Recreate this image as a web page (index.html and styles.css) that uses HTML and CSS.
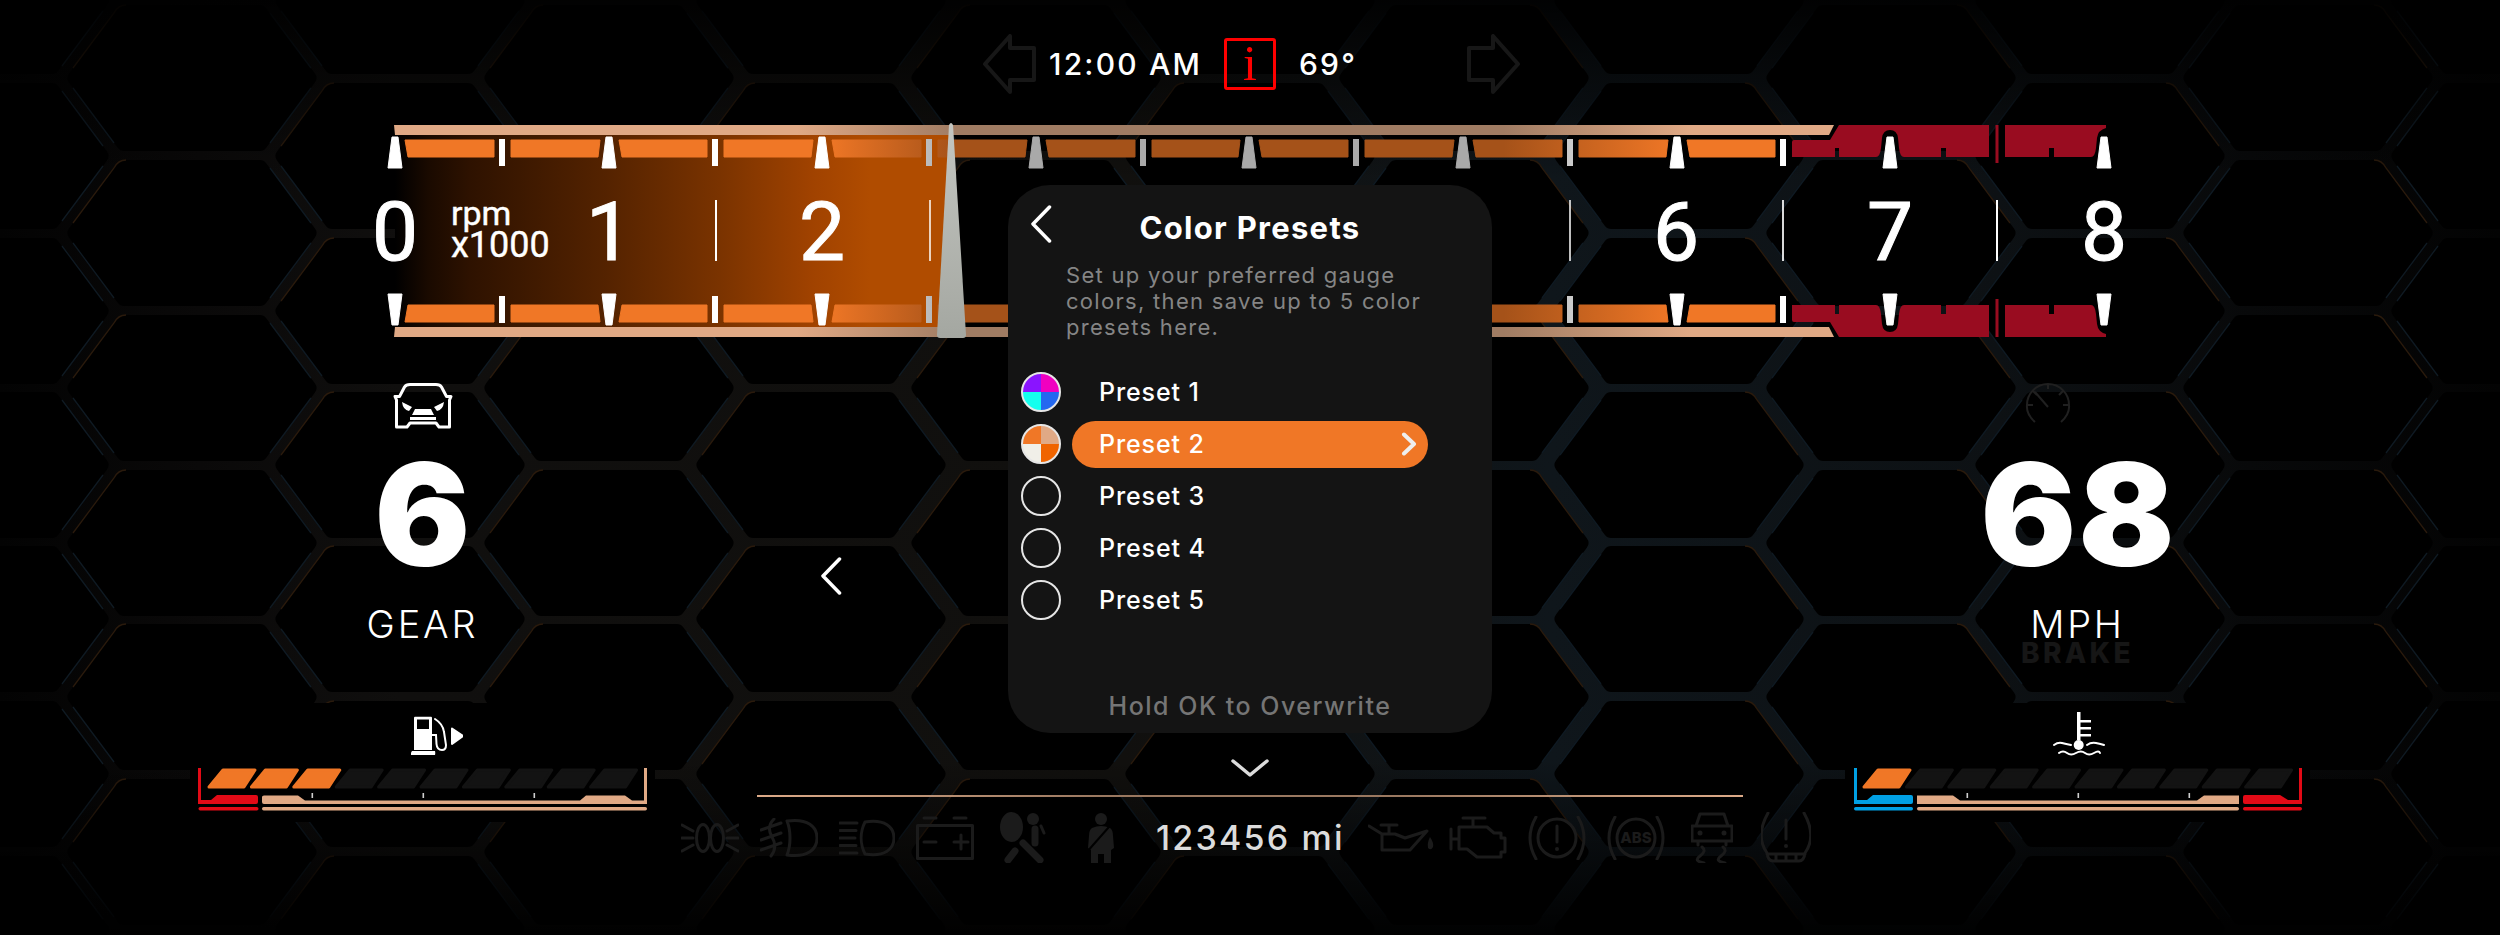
FILE: index.html
```html
<!DOCTYPE html>
<html lang="en">
<head>
<meta charset="utf-8">
<title>Gauge cluster</title>
<link rel="stylesheet" href="styles.css">
</head>
<body>
<div class="dash">
  <svg class="hexes" viewBox="0 0 2500 935" width="2500" height="935" aria-hidden="true">
    <defs>
      <linearGradient id="hexLine" x1="0" x2="2500" y1="0" y2="0" gradientUnits="userSpaceOnUse">
        <stop offset="0" stop-color="#030303"/><stop offset=".08" stop-color="#0a0909"/><stop offset=".16" stop-color="#100f0e"/><stop offset=".45" stop-color="#11100e"/>
        <stop offset=".62" stop-color="#0f161b"/><stop offset=".8" stop-color="#0d1114"/><stop offset=".9" stop-color="#08090a"/><stop offset="1" stop-color="#030303"/>
      </linearGradient>
      <linearGradient id="fadeTop" x1="0" x2="0" y1="0" y2="1"><stop offset="0" stop-color="#000" stop-opacity=".9"/><stop offset="1" stop-color="#000" stop-opacity="0"/></linearGradient>
      <linearGradient id="fadeBottom" x1="0" x2="0" y1="0" y2="1"><stop offset="0" stop-color="#000" stop-opacity="0"/><stop offset="1" stop-color="#000" stop-opacity=".95"/></linearGradient>
      <g id="cell">
        <path class="cell-fill" d="M-116.4 0L-67.8 -65H67.8L116.4 0L67.8 65H-67.8Z"/>
        <path class="edge-warm" d="M-119 -10L-78 -65Q-74 -73 -66 -73"/>
        <path class="edge-cool" d="M78 -65L119 -10M-119 10L-78 65M78 65L119 10"/>
      </g>
      <g id="colA">
        <use href="#cell" y="78"/><use href="#cell" y="233"/><use href="#cell" y="388"/><use href="#cell" y="543"/><use href="#cell" y="697"/><use href="#cell" y="852"/><use href="#cell" y="1007"/>
      </g>
      <g id="colB">
        <use href="#cell" y="1"/><use href="#cell" y="156"/><use href="#cell" y="311"/><use href="#cell" y="465"/><use href="#cell" y="619"/><use href="#cell" y="774"/><use href="#cell" y="929"/>
      </g>
      <g id="hexHalf">
        <use href="#colB" x="-16"/><use href="#colA" x="192"/><use href="#colB" x="400"/><use href="#colA" x="609"/><use href="#colB" x="821"/><use href="#colA" x="1036"/>
      </g>
    </defs>
    <rect width="2500" height="935" fill="url(#hexLine)"/>
    <use href="#hexHalf"/>
    <use href="#hexHalf" transform="matrix(-1 0 0 1 2500 0)"/>
    <use href="#colB" x="1250"/>
    <rect width="2500" height="180" fill="url(#fadeTop)"/>
    <rect y="760" width="2500" height="175" fill="url(#fadeBottom)"/>
  </svg>

  <header class="topbar">
    <svg class="turn" width="54" height="60" viewBox="0 0 54 60"><path d="M2 30L27 2V14H51V46H27V58Z"/></svg>
    <span class="clock">12:00 AM</span>
    <span class="info">i</span>
    <span class="temp">69°</span>
    <svg class="turn turn-right" width="54" height="60" viewBox="0 0 54 60"><path d="M52 30L27 2V14H3V46H27V58Z"/></svg>
  </header>

  <svg class="tach" viewBox="0 120 2500 225" width="2500" height="225">
    <defs>
      <linearGradient id="gTan" x1="394" x2="1835" y1="0" y2="0" gradientUnits="userSpaceOnUse">
        <stop offset=".28" stop-color="#e0a985"/><stop offset=".39" stop-color="#a07c63"/><stop offset=".77" stop-color="#a07c63"/><stop offset=".9" stop-color="#e0a985"/>
      </linearGradient>
      <linearGradient id="gOrange" x1="394" x2="1835" y1="0" y2="0" gradientUnits="userSpaceOnUse">
        <stop offset=".3" stop-color="#f07726"/><stop offset=".39" stop-color="#a55219"/><stop offset=".77" stop-color="#a55219"/><stop offset=".89" stop-color="#f07726"/>
      </linearGradient>
      <linearGradient id="gWhite" x1="394" x2="1835" y1="0" y2="0" gradientUnits="userSpaceOnUse">
        <stop offset=".3" stop-color="#ffffff"/><stop offset=".39" stop-color="#a9a9a9"/><stop offset=".77" stop-color="#a9a9a9"/><stop offset=".89" stop-color="#ffffff"/>
      </linearGradient>
      <linearGradient id="gSweep" x1="395" x2="950" y1="0" y2="0" gradientUnits="userSpaceOnUse">
        <stop offset="0" stop-color="#000"/><stop offset=".06" stop-color="#1a0a00"/><stop offset=".135" stop-color="#2e1200"/><stop offset=".385" stop-color="#552300"/><stop offset=".585" stop-color="#7a3300"/><stop offset=".75" stop-color="#a04200"/><stop offset=".855" stop-color="#b04c00"/><stop offset="1" stop-color="#b04c00"/>
      </linearGradient>
      <linearGradient id="gNeedle" x1="0" x2="0" y1="0" y2="1"><stop offset="0" stop-color="#c4c6c1"/><stop offset="1" stop-color="#a4a7a1"/></linearGradient>
      <g id="tachHalf">
        <path fill="url(#gTan)" d="M394 125H1834L1829 135H395Z"/>
        <path fill="url(#gOrange)" stroke="url(#gOrange)" stroke-linejoin="round" d="M405 140H494V157H408ZM511 140H600L598 157H511ZM619 140H707V157H622ZM724 140H813L811 157H724ZM832 140H921V157H835ZM938 140H1027L1025 157H938ZM1046 140H1135V157H1049ZM1152 140H1240L1238 157H1152ZM1259 140H1348V157H1262ZM1365 140H1454L1452 157H1365ZM1473 140H1562V157H1476ZM1579 140H1668L1666 157H1579ZM1687 140H1775V157H1690Z"/>
        <path fill="url(#gWhite)" stroke="url(#gWhite)" stroke-linejoin="round" d="M392 137H398L402 168H388ZM606 137H612L616 168H602ZM819 137H825L829 168H815ZM1033 137H1039L1043 168H1029ZM1246 137H1252L1256 168H1242ZM1460 137H1466L1470 168H1456ZM1674 137H1680L1684 168H1670ZM1887 137H1893L1897 168H1883ZM2101 137H2107L2111 168H2097Z"/>
        <path fill="url(#gWhite)" d="M499 139h6v27h-6zM712 139h6v27h-6zM926 139h6v27h-6zM1140 139h6v27h-6zM1353 139h6v27h-6zM1567 139h6v27h-6zM1780 139h6v27h-6z"/>
        <path class="redline" d="M1792 142Q1792 140 1794 140H1830L1839 125H1989V157H1946V148H1941V157H1904Q1900 157 1899 148L1898 138Q1897 130 1890 130Q1883 130 1882 138L1881 148Q1880 157 1876 157H1839V148H1835V157H1792ZM1995.5 125H1998.5V163H1995.5ZM2005 125H2106V128Q2098 130 2097 138L2096 148Q2095 157 2091 157H2054V148H2049V157H2005Z"/>
      </g>
    </defs>
    <rect x="395" y="135" width="555" height="192" fill="url(#gSweep)"/>
    <use href="#tachHalf"/>
    <use href="#tachHalf" transform="matrix(1 0 0 -1 0 462)"/>
    <g class="dividers">
      <rect x="715" y="200" width="2" height="61"/>
      <rect x="929" y="200" width="2" height="61" opacity=".75"/>
      <rect x="1569" y="200" width="2" height="61" opacity=".75"/>
      <rect x="1782" y="200" width="2" height="61" opacity=".85"/>
      <rect x="1996" y="200" width="2" height="61"/>
    </g>
    <g class="rev">
      <text x="395" y="260">0</text><text x="609" y="260">1</text><text x="822" y="260">2</text>
      <text x="1676" y="260">6</text><text x="1890" y="260">7</text><text x="2104" y="260">8</text>
    </g>
    <text class="unit" x="451" y="225">rpm</text>
    <text class="unit unit-x" x="451" y="257">x1000</text>
    <path fill="url(#gNeedle)" d="M949 125Q951 121 953 125L966 335Q966 338 963 338H940Q937 338 937 335Z"/>
  </svg>

  <main class="lower">
    <section class="side">
      <div class="stat">
        <svg class="car" width="60" height="46" viewBox="0 0 60 46"><path class="car-body" d="M2 13.5H6.5L11.5 4Q13 1.5 17 1.5H43Q47 1.5 48.5 4L53.5 13.5H58L56.5 17V44H46L43 40H17L14 44H3.5V17Z"/><path class="car-face" d="M9 19L19 24L16 28Q10 27 9 19ZM51 19L41 24L44 28Q50 27 51 19ZM22 26H38L41 32H19ZM17 34H43V37H17Z"/></svg>
        <div class="big">6</div>
        <div class="label">GEAR</div>
      </div>
      <div class="gauge">
        <svg class="fuel" width="52" height="39" viewBox="0 0 52 39"><path class="white" d="M4 0.7H20Q21 0.7 21 2V34H3V2Q3 0.7 4 0.7ZM6 3.5V13H18V3.5ZM1 35H24Q24.5 37 24 39H0Q-0.5 37 1 35Z" fill-rule="evenodd"/><path class="hose" d="M24 3Q32 8 33 16L35 29Q35 34 31 34Q26 34 25.5 28L25 19H21"/><path class="tri" d="M41 12.5L52 20L41 28Z"/></svg>
        <svg class="rail" viewBox="190 768 465 44" width="465" height="44">
          <defs>
            <path id="bar" d="M15 770H47L36 787H1Z"/>
            <g id="ticks"><rect x="0" y="793" width="1.6" height="5"/><rect x="111" y="793" width="1.6" height="5"/><rect x="222" y="793" width="1.6" height="5"/></g>
          </defs>
          <g class="cells-off"><use href="#bar" x="335.2"/><use href="#bar" x="377.6"/><use href="#bar" x="420"/><use href="#bar" x="462.4"/><use href="#bar" x="504.8"/><use href="#bar" x="547.2"/><use href="#bar" x="589.6"/></g>
          <g class="cells-on"><use href="#bar" x="208"/><use href="#bar" x="250.4"/><use href="#bar" x="292.8"/></g>
          <path class="red" d="M198 768H201V800H211L217 795H256Q258 795 258 797V802Q258 804 256 804H198Z"/><rect class="red" x="198.500" y="807" width="60" height="3.5" rx="1.700"/>
          <path class="tan" d="M262 797Q262 795.500 264 795.500H298L305 800.500H580L586 795.500H625L632 800.500H644V768H647V804H264Q262 804 262 802Z"/><rect class="tan" x="262" y="807" width="385" height="3.5" rx="1.700"/>
          <use class="tick" href="#ticks" x="311.500"/>
        </svg>
      </div>
    </section>

    <section class="middle">
      <svg class="back-outer" width="22" height="38" viewBox="0 0 22 38"><path d="M19.500 2L3 19L19.500 36"/></svg>
      <svg class="more" width="38" height="18" viewBox="0 0 38 18"><path d="M2 2L19 16L36 2"/></svg>
      <div class="odo-line"></div>
      <div class="tells">
        <svg width="58" height="36" viewBox="0 0 58 36"><ellipse cx="22" cy="18" rx="6.500" ry="13.500"/><ellipse cx="36" cy="18" rx="6.500" ry="13.500"/><path d="M1 5L12 11M1 18H12M1 31L12 25M57 5L46 11M57 18H46M57 31L46 25"/></svg>
        <svg width="58" height="40" viewBox="0 0 58 40"><path d="M27 3C48 0 57 9 57 20C57 31 48 40 27 37C31 27 31 13 27 3Z"/><path d="M1 12L21 5M1 22L21 15M1 32L21 25M14 1Q6 9 12 19T11 38"/></svg>
        <svg width="56" height="38" viewBox="0 0 56 38"><path d="M26 3C46 0 55 8 55 19C55 30 46 38 26 35C21 25 21 13 26 3Z"/><path d="M1 4H18M1 11.500H17M1 19H16M1 26.500H17M1 34H18"/></svg>
        <svg width="58" height="44" viewBox="0 0 58 44"><path d="M1.500 9.500H56.500V42.500H1.500ZM8 2H20M38 2H50M8 26H20M38 26H52M45 19V33"/></svg>
        <svg class="t-bag" width="47" height="51" viewBox="0 0 47 51"><ellipse class="solid" cx="11.500" cy="15" rx="11.500" ry="15"/><circle class="solid" cx="33" cy="7" r="6"/><path class="thick" d="M35 17V31M15 39L8 48M23 31L40 48"/><path d="M41 14L44 21"/></svg>
        <svg class="t-belt" width="34" height="51" viewBox="0 0 34 51"><circle class="solid" cx="17" cy="7" r="6"/><path class="solid" d="M8 16Q17 12 26 16Q29 18 29 24L30 36L27 38V51H20V42H14V51H7V38L4 36L5 24Q5 18 8 16Z"/><path class="cut" d="M2 41L32 7"/></svg>
        <span class="odo">123456 mi</span>
        <svg class="t-oil" width="66" height="29" viewBox="0 0 66 29"><path d="M1 3L14 11V27H42L59 8L37 15L27 11H14M13 2H29M21 2V11"/><path class="solid" d="M62 14Q66 20 65 24Q63 28 60 25Q59 20 62 14Z"/></svg>
        <svg class="t-eng" width="58" height="43" viewBox="0 0 58 43"><path d="M2 13V33M2 23H10M10 11H38L45 17H52V22H56V36H52V41H28L18 33H10ZM24 11V3M14 2H36"/></svg>
        <svg width="58" height="44" viewBox="0 0 58 44"><circle cx="29" cy="22" r="19"/><path d="M8 1Q-4 22 8 43M50 1Q62 22 50 43M29 10V26"/><circle class="solid" cx="29" cy="33" r="2"/></svg>
        <svg width="58" height="44" viewBox="0 0 58 44"><circle cx="29" cy="22" r="19"/><path d="M8 1Q-4 22 8 43M50 1Q62 22 50 43"/><text class="abs" x="29" y="27">ABS</text></svg>
        <svg class="t-skid" width="42" height="51" viewBox="0 0 42 51"><path d="M9 2H33L37 14H41V29H1V14H5ZM5 14H37M7 29V33M35 29V33"/><path d="M11 35Q16 39 9 44T13 51M32 35Q37 39 30 44T34 51"/><circle class="solid" cx="9" cy="21" r="2.500"/><circle class="solid" cx="33" cy="21" r="2.500"/></svg>
        <svg class="t-tpms" width="50" height="51" viewBox="0 0 50 51"><path d="M7 1Q-6 24 6 41Q7 49 12 49H38Q43 49 44 41Q56 24 43 1M6 42H44M15 42V49M25 42V49M35 42V49M25 8V27"/><circle class="solid" cx="25" cy="34" r="2"/></svg>
      </div>
    </section>

    <section class="side">
      <div class="stat">
        <svg class="speedo" width="46" height="46" viewBox="0 0 46 46"><path d="M10 39Q1 31 2 22A21 21 0 0 1 44 22Q45 31 36 39M23 1V6M2 22H8M44 22H38M8 8L12 12M38 8L34 12M10 9L23 24"/></svg>
        <div class="big big-speed">68</div>
        <div class="label">MPH</div>
        <div class="brake">BRAKE</div>
      </div>
      <div class="gauge">
        <svg class="coolant" width="52" height="45" viewBox="0 0 52 45"><path class="white" d="M24 0H27.500V28H24ZM27.500 8H38V10.500H27.500ZM27.500 15H38V17.500H27.500ZM27.500 22H38V24.500H27.500Z"/><circle class="white" cx="25.700" cy="33" r="5"/><path class="hose" d="M1 33Q5 30 9 31T18 33M34 33Q38 30 43 31T51 33M6 41Q10 38 14 41T23 41T32 41T41 41T47 41"/></svg>
        <svg class="rail" viewBox="1845 768 465 44" width="465" height="44">
          <g class="cells-off"><use href="#bar" x="1905.400"/><use href="#bar" x="1947.800"/><use href="#bar" x="1990.200"/><use href="#bar" x="2032.600"/><use href="#bar" x="2075"/><use href="#bar" x="2117.400"/><use href="#bar" x="2159.800"/><use href="#bar" x="2202.200"/><use href="#bar" x="2244.600"/></g>
          <g class="cells-on"><use href="#bar" x="1863"/></g>
          <path class="blue" d="M1854 768H1857V800H1867L1873 795H1911Q1913 795 1913 797V802Q1913 804 1911 804H1854Z"/><rect class="blue" x="1854" y="807" width="59" height="3.5" rx="1.700"/>
          <path class="tan" d="M1917 795.500H1953L1960 800.500H2197L2204 795.500H2239V804H1917Z"/><rect class="tan" x="1917" y="807" width="322" height="3.5" rx="1.700"/>
          <path class="red" d="M2245 795H2280L2288 800H2299V768H2302V804H2245Q2243 804 2243 802V797Q2243 795 2245 795Z"/><rect class="red" x="2243" y="807" width="59" height="3.5" rx="1.700"/>
          <use class="tick" href="#ticks" x="1966.500"/>
        </svg>
      </div>
    </section>
  </main>

  <aside class="panel">
    <div class="panel-head">
      <svg class="panel-back" width="22" height="38" viewBox="0 0 22 38"><path d="M19.500 2L3 19L19.500 36"/></svg>
      <h1>Color Presets</h1>
    </div>
    <p class="desc">Set up your preferred gauge colors, then save up to 5 color presets here.</p>
    <ul class="presets">
      <li><span class="swatch swatch-a"></span><span class="pill">Preset 1</span></li>
      <li><span class="swatch swatch-b"></span><span class="pill pill-on">Preset 2<svg width="16" height="24" viewBox="0 0 16 24"><path d="M3 2.500L13 12L3 21.500"/></svg></span></li>
      <li><span class="swatch"></span><span class="pill">Preset 3</span></li>
      <li><span class="swatch"></span><span class="pill">Preset 4</span></li>
      <li><span class="swatch"></span><span class="pill">Preset 5</span></li>
    </ul>
    <p class="hint">Hold OK to Overwrite</p>
  </aside>
</div>
</body>
</html>
```

FILE: styles.css
```css
* { box-sizing: border-box; }
html, body { margin: 0; padding: 0; background: #000; }
.dash {
  position: relative;
  width: 2500px;
  height: 935px;
  overflow: hidden;
  background: #000;
  color: #fff;
  font-family: Inter, "Liberation Sans", sans-serif;
}
svg { display: block; flex: none; }

/* backdrop */
.hexes { position: absolute; left: 0; top: 0; }
.cell-fill { fill: #000; stroke: #000; stroke-width: 16; stroke-linejoin: round; }
.edge-warm { fill: none; stroke: #2a1a0c; stroke-width: 1.3; }
.edge-cool { fill: none; stroke: #0f1a23; stroke-width: 1.3; }

/* top bar */
.topbar {
  position: relative;
  height: 120px;
  padding: 8px 0 0 983px;
  display: flex;
  align-items: center;
}
.turn path { fill: none; stroke: #171717; stroke-width: 4; stroke-linejoin: round; }
.clock, .temp { font-size: 30px; font-weight: 500; letter-spacing: 2.2px; }
.clock { margin: 0 22px 0 12px; }
.info {
  width: 52px;
  height: 52px;
  border: 3px solid #f00;
  border-radius: 3px;
  color: #f00;
  font: 50px/44px "Liberation Serif", serif;
  text-align: center;
}
.temp { margin: 0 109px 0 23px; }

/* tach */
.tach { position: relative; }
.redline { fill: #990c20; }
.dividers rect { fill: #fff; }
.rev text { font: 400 82px Roboto, sans-serif; fill: #fff; stroke: #fff; stroke-width: 1; text-anchor: middle; }
.unit { font: 400 34px Roboto, sans-serif; fill: #fff; stroke: #fff; stroke-width: .4; }
.unit-x { font-size: 36px; }

/* lower area */
.lower {
  position: relative;
  display: flex;
  padding: 0 190px;
  height: 590px;
}
.side { width: 465px; display: flex; flex-direction: column; }
.stat {
  height: 358px;
  padding-top: 38px;
  display: flex;
  flex-direction: column;
  align-items: center;
}
.car-body { fill: none; stroke: #fff; stroke-width: 3; stroke-linejoin: round; }
.car-face { fill: #fff; }
.big {
  margin-top: 29px;
  font-size: 142px;
  line-height: 113px;
  font-weight: 900;
}
.big-speed { letter-spacing: 2px; margin-right: -2px; }
.label {
  margin-top: 40px;
  font-size: 38px;
  line-height: 26px;
  font-weight: 300;
  letter-spacing: 2.8px;
}
.brake {
  margin-top: 6px;
  font-size: 28px;
  line-height: 20px;
  font-weight: 800;
  letter-spacing: 3.3px;
  color: #161616;
}
.speedo { margin-right: 59px; }
.speedo path { fill: none; stroke: #202020; stroke-width: 2; }

.gauge {
  height: 119px;
  padding-top: 13px;
  background: #000;
  display: flex;
  flex-direction: column;
  align-items: center;
}
.fuel { margin: 0 0 13px 29px; }
.coolant { margin: -4px 0 11px 3px; }
.white, .tri { fill: #fff; }
.tri { stroke: #fff; stroke-width: 2; stroke-linejoin: round; }
.hose { fill: none; stroke: #fff; stroke-width: 2; stroke-linecap: round; }
.cells-off use { fill: #131313; stroke: #131313; stroke-width: 3; stroke-linejoin: round; }
.cells-on use { fill: #f07726; stroke: #f07726; stroke-width: 3; stroke-linejoin: round; }
.red { fill: #e20a16; }
.blue { fill: #00a0e4; }
.tan { fill: #e0a985; }
.tick { fill: #cfcfcf; }

/* middle column */
.middle {
  width: 1190px;
  display: flex;
  flex-direction: column;
  align-items: center;
}
.back-outer { align-self: flex-start; margin: 212px 0 0 165px; }
.back-outer path, .panel-back path { fill: none; stroke: #fff; stroke-width: 3.5; stroke-linecap: round; stroke-linejoin: round; }
.more { margin-top: 164px; }
.more path { fill: none; stroke: #dcdcdc; stroke-width: 3.5; stroke-linecap: round; stroke-linejoin: round; }
.odo-line {
  margin-top: 18px;
  width: 986px;
  height: 2px;
  background: linear-gradient(90deg, #dcaa88, #9a7860 35%, #9a7860 65%, #dcaa88);
}
.tells {
  align-self: flex-start;
  margin: 15px 0 0 26px;
  height: 51px;
  display: flex;
  align-items: center;
  gap: 21px;
}
.tells svg path, .tells svg circle, .tells svg ellipse { fill: none; stroke: #1b1b1b; stroke-width: 3; stroke-linecap: round; stroke-linejoin: round; }
.tells svg .solid { fill: #1b1b1b; stroke: none; }
.tells svg .thick { stroke-width: 7; }
.tells svg .cut { stroke: #000; stroke-width: 2; }
.abs { font: 800 15px Inter, sans-serif; fill: #1b1b1b; text-anchor: middle; }
.t-bag { margin-left: 5px; }
.t-belt { margin-left: 16px; }
.odo { margin: 0 2px 0 17px; font-size: 34px; font-weight: 500; color: #dcdcdc; letter-spacing: 2.2px; }
.t-eng { margin-left: -6px; }
.t-skid { margin-left: 5px; }
.t-tpms { margin-left: 7px; }

/* panel */
.panel {
  position: absolute;
  left: 1008px;
  top: 185px;
  width: 484px;
  height: 548px;
  border-radius: 42px;
  background: #141414;
  display: flex;
  flex-direction: column;
}
.panel-head { height: 77px; display: flex; align-items: center; justify-content: center; position: relative; }
.panel-back { position: absolute; left: 22px; top: 20px; }
h1 { margin: 8px 0 0; font-size: 31px; font-weight: 700; letter-spacing: 1.3px; line-height: 36px; }
.desc {
  margin: 0 0 0 58px;
  width: 400px;
  font-size: 22px;
  line-height: 26px;
  font-weight: 400;
  color: #858585;
  letter-spacing: 1.3px;
}
.presets { list-style: none; margin: 26px 0 0; padding: 0; }
.presets li { height: 52px; display: flex; align-items: center; padding-left: 13px; }
.swatch {
  width: 40px;
  height: 40px;
  border-radius: 50%;
  border: 2px solid #e6e6e6;
}
.swatch-a { background: conic-gradient(#f000c0 0 25%, #2468f0 0 50%, #14ffee 0 75%, #8a14ff 0); }
.swatch-b { background: conic-gradient(#e0a985 0 25%, #f06400 0 50%, #f0efe8 0 75%, #f07726 0); }
.pill {
  margin-left: 11px;
  width: 356px;
  height: 47px;
  padding: 0 11px 0 27px;
  border-radius: 24px;
  display: flex;
  align-items: center;
  justify-content: space-between;
  font-size: 25px;
  font-weight: 500;
  letter-spacing: .9px;
}
.pill-on { background: #f07726; }
.pill-on path { fill: none; stroke: #eee; stroke-width: 4; stroke-linecap: round; stroke-linejoin: round; }
.hint {
  margin: auto 0 12px;
  text-align: center;
  font-size: 25px;
  line-height: 30px;
  font-weight: 500;
  letter-spacing: 1.5px;
  color: #757575;
}
```
